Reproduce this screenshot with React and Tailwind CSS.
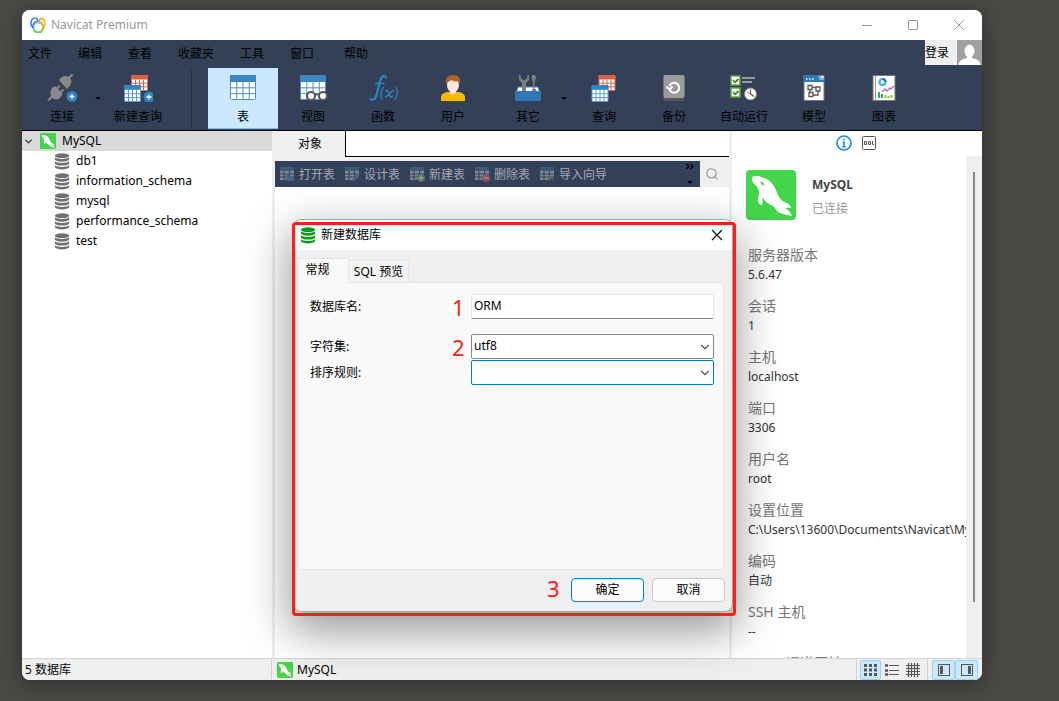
import React, { useState } from 'react'
import { ChevronDown, Search } from 'lucide-react'

const menus = ['文件', '编辑', '查看', '收藏夹', '工具', '窗口', '帮助']
const databases = ['db1', 'information_schema', 'mysql', 'performance_schema', 'test']

const details = [
  ['服务器版本', '5.6.47'],
  ['会话', '1'],
  ['主机', 'localhost'],
  ['端口', '3306'],
  ['用户名', 'root'],
  ['设置位置', 'C:\\Users\\13600\\Documents\\Navicat\\MySQL\\servers'],
  ['编码', '自动'],
  ['SSH 主机', '--'],
  ['HTTP 通道网址', '--'],
]

function NavicatLogo() {
  return (
    <svg viewBox="0 0 16 16" className="size-4" fill="none" strokeWidth="1.6">
      <path d="M3.600 10a4.800 4.800 0 1 0 9.400 0" stroke="#35c98c" />
      <path d="M4.500 13.200a4.800 4.800 0 0 0 8.500-3" stroke="#8ed62a" />
      <path d="M3.600 10.500C3.800 7.500 6 6 8.300 6s4.300 1.500 4.700 4" stroke="#6fc5a0" strokeWidth="1" />
      <path d="M2.600 10.200C0 8 .3 3 3.400 1.400 5.500 .4 8 1.300 7.900 4.200 5.500 4.400 3 6 2.600 10.200z" stroke="#2f80f5" />
      <path d="M9.700 5C8.900 2 11.300 .6 13 1.900c2.300 2 2.700 5.500.7 8.100C13.500 7.500 12 6 9.700 5z" stroke="#fba70b" />
    </svg>
  )
}

function MysqlLogo({ className }) {
  return (
    <svg viewBox="0 0 50 50" className={className}>
      <rect width="50" height="50" rx="4" fill="#43d54a" />
      <path
        fill="#fff"
        d="M6 8c1-2 3-2.500 5-2 3 0 5 1.500 7 2 4 1 8 4.500 10.500 9 2 4 3.500 8 5 11 2 3 6 4 9 6 1.500 1.500 2.500 3 2.500 4.200-2-1-4-.8-5.500-.2 2.500 2 5.500 4.500 6.500 8-4-1-9-1.500-13-3.500-2.500-1.500-3.500-4.500-6-6.500-4-2-8-4-10-8.500-1 2-.3 4-.5 6-.3 2-2.500 1.500-3.500 0-1.500-2-1.500-5-.5-7.500.8-1.500 1-3 .3-5C12 18 10.500 16 9 14.500 7 13 5.500 10.500 6 8z"
      />
      <path fill="#43d54a" d="M14 11.500c2-.5 4 .8 3.800 3-.8 1.500-2.500.8-2.300-.8-.2-1-.8-1.600-1.500-2.200z" />
    </svg>
  )
}

function DatabaseIcon({ className }) {
  return (
    <svg viewBox="0 0 16 18" className={className} fill="currentColor">
      <ellipse cx="8" cy="2.800" rx="7.500" ry="2.600" />
      <path d="M.5 4.500c2 2.400 13 2.400 15 0v2.700c-2 2.600-13 2.600-15 0z" />
      <path d="M.5 8.800c2 2.400 13 2.400 15 0v2.500c-2 2.600-13 2.600-15 0z" />
      <path d="M.5 12.900c2 2.400 13 2.400 15 0v2.300c-2 3-13 3-15 0z" />
    </svg>
  )
}

function Sheet({ x, y, w, h, head, line, body = '#fff' }) {
  const top = h * 0.27
  const cols = [1, 2, 3].map((n) => x + (w * n) / 4)
  const rows = [1, 2].map((n) => y + top + ((h - top) * n) / 3)
  return (
    <g>
      <rect x={x} y={y} width={w} height={h} rx="1" fill={body} stroke={line} />
      <rect x={x - 0.5} y={y - 0.5} width={w + 1} height={top + 0.5} rx="1" fill={head} />
      {cols.map((c) => <path key={c} d={`M${c} ${y + top}V${y + h}`} stroke={line} />)}
      {rows.map((r) => <path key={r} d={`M${x} ${r}H${x + w}`} stroke={line} />)}
    </g>
  )
}

function PlusBadge({ x, y }) {
  return (
    <g>
      <circle cx={x} cy={y} r="5.500" fill="#2f84c6" />
      <path d={`M${x - 2.5} ${y}h5M${x} ${y - 2.5}v5`} stroke="#fff" strokeWidth="1.300" />
    </g>
  )
}

const toolIcons = {
  connect: (
    <>
      <g fill="#8a8a8a" stroke="#8a8a8a">
        <path d="M11.500 6c2-3 5.500-4.500 8.500-3s3.500 4 2.500 7l-3.500 4.500z" strokeWidth="1" />
        <path d="M20.500 4.500L24.500 .5" strokeWidth="2.200" />
        <path d="M4 14.500l3-2 7 7c-.5 3-3 5.500-6 5.500s-5-2-5-5c-.2-2 .3-4 1-5.500z" strokeWidth="1" />
        <path d="M4.500 22L0 26.500M8.500 15l3-3M12 18.500l3.500-3" strokeWidth="2" />
      </g>
      <PlusBadge x={24} y={22.5} />
    </>
  ),
  newQuery: (
    <>
      <Sheet x={7.5} y={1.5} w={16} h={15} head="#dc6245" line="#dc6245" />
      <Sheet x={0.5} y={11.5} w={16} h={16} head="#2f84c6" line="#5a9bd3" />
      <PlusBadge x={25} y={23} />
    </>
  ),
  table: <Sheet x={1.5} y={1.5} w={25} h={24} head="#3a87c3" line="#4a90c8" />,
  view: (
    <>
      <Sheet x={1.5} y={1.5} w={25} h={24} head="#3a87c3" line="#4a90c8" />
      <g fill="#fff" stroke="#555" strokeWidth="2">
        <path d="M16 21c1-1 2-1 3 0" fill="none" />
        <circle cx="12" cy="22" r="4" />
        <circle cx="24" cy="22" r="4" />
      </g>
    </>
  ),
  func: (
    <g fill="none" stroke="#2f84c6" strokeLinecap="round">
      <path d="M17 3.500c-.5-1.500-3-2-4.500 0C10 7 9 18 6.500 23.500c-1.200 2.500-3.500 3-5 1.500" strokeWidth="2.200" />
      <path d="M6.500 9.500h8.500" strokeWidth="1.600" />
      <path d="M14.500 13.500c-3 3-3.500 8-1.500 12M27 13.500c2.500 4 1.500 9-1.500 12" strokeWidth="1.200" />
      <path d="M16.500 17c1.500-1 2.500-.5 3 1.500l1 3c.5 1.700 1.500 2 3 .5M24.500 16.500c-2.500 0-5 6.500-8 6" strokeWidth="1.500" />
    </g>
  ),
  user: (
    <>
      <path d="M2 27v-4c0-3 4-5 8-5h8c4 0 8 2 8 5v4z" fill="#fab800" />
      <path d="M11 14h6v5c-2 2-4 2-6 0z" fill="#fbdcc8" />
      <ellipse cx="14" cy="11" rx="6" ry="7.500" fill="#fde8db" />
      <path d="M7 10C6 4 9 1 14 1s8 3 7 9l-1.500-3c-3 1-6 0-7-1-1 1-3 2-4 1.500z" fill="#b0622a" />
    </>
  ),
  other: (
    <>
      <path d="M4 13h20l2 6H2z" fill="#fff" stroke="#3a87c3" />
      <path d="M5 1v5l3 3v9h4V9l3-3V1h-1.500L13 4.500l-3 2-3-2L6.500 1zM18 1h3l1 3-1.500 4v7H22v4h-4v-4h1V8l-1.500-4z" fill="#7c7f82" />
      <path d="M1 17h26v10H1z" fill="#2f78b3" />
    </>
  ),
  query: (
    <>
      <Sheet x={9} y={1.5} w={16} h={15} head="#dc6245" line="#dc6245" />
      <Sheet x={2} y={11.5} w={16} h={16} head="#2f84c6" line="#5a9bd3" />
    </>
  ),
  backup: (
    <>
      <rect x="3.500" y="1" width="21" height="26" rx="2" fill="#555" />
      <rect x="3.500" y="1" width="21" height="23" rx="2" fill="#9b9b9b" />
      <path d="M10 16.500a5 5 0 1 0-.5-4.500M6.500 12.500l3 3 3-3" fill="none" stroke="#fff" strokeWidth="2" />
    </>
  ),
  automation: (
    <>
      <g fill="#fff" stroke="#61a53c" strokeWidth="1.500">
        <rect x="1" y="2" width="9" height="9" />
        <rect x="1" y="14" width="9" height="9" />
      </g>
      <path d="M3 6l2 2.500L8.500 5M3 18l2 2.500L8.500 17" fill="none" stroke="#3d8c2a" strokeWidth="1.800" />
      <path d="M12 4h13M12 8h10" stroke="#999" strokeWidth="2" />
      <circle cx="20.500" cy="20" r="6" fill="#fff" stroke="#888" />
      <path d="M20.500 15.500V20l3.500 2.500" fill="none" stroke="#555" strokeWidth="1.200" />
      <path d="M20.500 20L17 18" stroke="#e3513b" />
    </>
  ),
  model: (
    <>
      <rect x="4" y="1.500" width="20" height="25" fill="#fff" stroke="#777" />
      <path d="M3.500 1h15l6 5v2h-21z" fill="#2f78b3" />
      <path d="M18 1l6.500 5h-5z" fill="#6db6ee" />
      <path d="M6 5h1.500M9 5h1.500M12 5h1.500" stroke="#fff" strokeWidth="1.500" />
      <path d="M8 11.500h4v4H8zM16 13h4v4h-4zM9 18.500h4v4H9zM12 13.500h4M13 21h5v-4M10 15.500v3" fill="none" stroke="#555" strokeWidth="1.300" />
    </>
  ),
  chart: (
    <>
      <rect x="3" y="1.500" width="22" height="25" fill="#fff" stroke="#777" />
      <path d="M5.500 1.500v25" stroke="#999" />
      <circle cx="12.500" cy="8" r="3" fill="none" stroke="#37b2ea" strokeWidth="2" />
      <path d="M12.500 5a3 3 0 0 1 3 3" fill="none" stroke="#2b6fb5" strokeWidth="2" />
      <path d="M12 18l3-3 2 2 3-3 1 1 3-3" fill="none" stroke="#b568cf" strokeWidth="1.300" />
      <path d="M9 18v6M12 20v4" stroke="#32b14a" strokeWidth="2" />
      <path d="M15.500 21v3M18.500 22v2M21.500 21v3" stroke="#86cc2c" strokeWidth="2" />
    </>
  ),
}

function Tool({ icon, label, active, width = 'w-[70px]' }) {
  return (
    <button
      className={`${width} h-[61px] shrink-0 flex flex-col items-center gap-[7px] pt-1.5 text-black ${
        active ? 'bg-[#cce8ff] border-b border-[#78bdf0]' : ''
      }`}
    >
      <svg viewBox="0 0 30 28" className="w-[30px] h-7 shrink-0">
        <g transform="translate(1 0)">{toolIcons[icon]}</g>
      </svg>
      <span className="leading-4 whitespace-nowrap">{label}</span>
    </button>
  )
}

function SplitTool({ icon, label }) {
  return (
    <div className="flex items-center w-[81px] shrink-0 pl-[7px]">
      <Tool icon={icon} label={label} width="w-[66px]" />
      <button aria-label={`${label} 选项`} className="border-x-3 border-t-3 border-x-transparent border-t-black" />
    </div>
  )
}

function ActionIcon({ kind }) {
  return (
    <svg viewBox="0 0 16 16" className="size-4 shrink-0">
      <path d="M1 1h14v4H1z" fill="#3d5a78" />
      <path d="M1 5h3.500v2.500H1zM5.500 5H10v2.500H5.500zM11 5h4v2.500h-4zM1 8.500h3.500v2H1zM5.500 8.500H10v2H5.500zM11 8.500h4v2h-4zM1 11.500h3.500V14H1zM5.500 11.500H10V14H5.500z" fill="#7d8797" />
      {kind === 'open' && <path d="M7 9h3l1 1.500h4V15H7z" fill="#46627f" />}
      {kind === 'design' && <path d="M8 14l5-6 2.500 2-5 5-3 .5z" fill="#46627f" />}
      {kind === 'add' && <><circle cx="12" cy="12" r="4" fill="#54755f" /><path d="M9.500 12h5M12 9.500v5" stroke="#a6b3ab" /></>}
      {kind === 'delete' && <><circle cx="12" cy="12" r="4" fill="#87535a" /><path d="M9.500 12h5" stroke="#b9a0a8" /></>}
      {kind === 'import' && <path d="M7 11.500l4-3v2c3 0 4.500 2 4.500 5-1-2-2.500-2.500-4.500-2.500v2z" fill="#4c6d60" />}
    </svg>
  )
}

function ActionBar() {
  const actions = [
    ['open', '打开表'],
    ['design', '设计表'],
    ['add', '新建表'],
    ['delete', '删除表'],
    ['import', '导入向导'],
  ]
  return (
    <div className="h-[26px] flex">
      <div className="flex-1 flex items-center gap-[9px] pl-1 pr-1.5 bg-[#344057] text-[#a4a9b3]">
        {actions.map(([kind, label]) => (
          <button key={kind} className="flex items-center gap-1 whitespace-nowrap leading-4">
            <ActionIcon kind={kind} />
            <span className="pt-0.5">{label}</span>
          </button>
        ))}
        <button aria-label="更多" className="ml-auto self-stretch">
          <svg viewBox="0 0 8 22" className="w-2 h-[22px]">
            <path d="M.5 1l2.500 2.500L.5 6M4.500 1L7 3.500 4.500 6" fill="none" stroke="#000" strokeWidth="1.300" />
            <path d="M1 18h6l-3 3z" />
          </svg>
        </button>
      </div>
      <button aria-label="搜索" className="w-[29px] flex items-center pl-[5px] text-[#8a8a8a]">
        <Search size={14} strokeWidth={1.8} />
      </button>
    </div>
  )
}

function ComboBox({ id, options, focused }) {
  return (
    <div className="relative">
      <select
        id={id}
        className={`block w-full h-[25px] appearance-none rounded-xs border bg-white pl-[2px] pr-6 pb-[2px] outline-none ${
          focused ? 'border-[#0078d4]' : 'border-[#868686]'
        }`}
      >
        {options.map((o) => <option key={o}>{o}</option>)}
      </select>
      <ChevronDown size={14} strokeWidth={2} className="absolute right-[2px] top-1.5 text-[#555] pointer-events-none" />
    </div>
  )
}

function FormRow({ id, label, mark, children }) {
  return (
    <div className="flex items-center h-[25px]">
      <label htmlFor={id} className="flex-1">{label}</label>
      <span className="w-[19px] text-[22px] leading-6 text-[#ff1e12]">{mark}</span>
      <div className="w-[243px]">{children}</div>
    </div>
  )
}

function NewDatabaseDialog() {
  const [name, setName] = useState('ORM')
  return (
    <div
      role="dialog"
      aria-label="新建数据库"
      className="absolute left-[271px] top-[209px] w-[440px] h-[393px] flex flex-col rounded-lg border border-[#a3a3a3] bg-[#efefef] shadow-[0_16px_44px_4px_rgba(0,0,0,0.4)]"
    >
      <div className="h-[30px] shrink-0 flex items-center gap-[5px] rounded-t-lg bg-white pl-1.5 pr-[9px]">
        <DatabaseIcon className="w-4 h-[17px] text-[#0c9a17]" />
        <span className="flex-1">新建数据库</span>
        <button aria-label="关闭">
          <svg viewBox="0 0 12 12" className="size-3"><path d="M1 1l10 10M11 1L1 11" stroke="#111" strokeWidth="1.200" /></svg>
        </button>
      </div>

      <div className="flex-1 flex flex-col px-1 pt-2 pr-2 pb-[9px]">
        <div className="flex items-end" role="tablist">
          <button role="tab" className="relative z-10 -mb-px h-[25px] w-[51px] border border-b-0 border-[#e5e5e5] bg-[#f9f9f9] pr-3 pb-0.5 leading-5">常规</button>
          <button role="tab" className="h-[22px] w-[60px] border border-l-0 border-b-0 border-[#e5e5e5] bg-[#f3f3f3] whitespace-nowrap leading-5">SQL 预览</button>
        </div>
        <div className="flex-1 border border-[#e5e5e5] bg-[#f9f9f9] pl-[11px] pr-[9px] pt-[11px]">
          <FormRow id="db-name" label="数据库名:" mark="1">
            <input
              id="db-name"
              value={name}
              onChange={(e) => setName(e.target.value)}
              className="block w-full h-[25px] rounded-xs border border-[#e5e5e5] border-b-[#868686] bg-white pl-[2px] pb-[2px] outline-none"
            />
          </FormRow>
          <div className="mt-[15px] space-y-px">
            <FormRow id="charset" label="字符集:" mark="2">
              <ComboBox id="charset" options={['utf8']} />
            </FormRow>
            <FormRow id="collation" label="排序规则:">
              <ComboBox id="collation" options={['']} focused />
            </FormRow>
          </div>
        </div>
        <div className="-mr-px flex items-start justify-end gap-2 pt-2">
          <span className="w-4 text-[22px] leading-5 text-[#ff1e12]">3</span>
          <button className="w-[73px] h-6 rounded border border-[#0078d4] bg-[#fbfbfb]">确定</button>
          <button className="w-[73px] h-6 rounded border border-[#c8c8c8] bg-[#fbfbfb]">取消</button>
        </div>
      </div>

      {/* red highlight around the dialog */}
      <div className="absolute -left-[2px] top-[2px] w-[444px] h-[394px] rounded-sm border-3 border-[#ff1e12] pointer-events-none" />
    </div>
  )
}

function InfoPanel() {
  return (
    <aside className="w-[250px] shrink-0 flex flex-col bg-white">
      <div className="h-[25px] shrink-0 flex items-center justify-center gap-2.5 pr-0.5 pb-0.5">
        <button aria-label="信息" className="size-4">
          <svg viewBox="0 0 16 16" fill="none" stroke="#1a86ff">
            <circle cx="8" cy="8" r="7" strokeWidth="1.600" />
            <path d="M8 3.800v1.700M6.500 7.300H8v4.200M6.300 11.700h3.500" strokeWidth="1.600" />
          </svg>
        </button>
        <button aria-label="DDL" className="size-3.5">
          <svg viewBox="0 0 14 14" fill="none" stroke="#555">
            <rect x=".5" y=".5" width="13" height="13" rx="1" />
            <path d="M2.500 5.500h2v3h-2zM6.500 5.500h2v3h-2zM10.500 5v3.500H12" />
          </svg>
        </button>
      </div>
      <div className="flex-1 min-h-0 flex">
        <div className="flex-1 min-w-0 overflow-hidden pt-3.5">
          <div className="flex gap-4 pl-3.5">
            <MysqlLogo className="size-[50px]" />
            <div className="pt-1.5">
              <p className="leading-[18px] font-bold text-[#444]">MySQL</p>
              <p className="mt-1.5 leading-[18px] text-[#999]">已连接</p>
            </div>
          </div>
          <dl className="mt-[25px] pl-4 whitespace-nowrap">
            {details.map(([label, value]) => (
              <div key={label} className="mb-[11px]">
                <dt className="text-sm leading-5 text-[#777]">{label}</dt>
                <dd className="leading-5 text-[#333]">{value}</dd>
              </div>
            ))}
          </dl>
        </div>
        <div className="w-4 flex justify-center bg-[#efefef] pt-4 pb-14">
          <div className="w-[2px] bg-[#868686]" />
        </div>
      </div>
    </aside>
  )
}

function StatusBar() {
  return (
    <footer className="h-[22px] shrink-0 flex items-center border-t border-[#d5d5d5] bg-[#efefef]">
      <span className="w-[250px] h-[19px] leading-[19px] border-r border-[#d0d0d0] pl-[3px]">5 数据库</span>
      <span className="flex-1 flex items-center gap-1 pl-[5px]">
        <MysqlLogo className="size-4" />
        MySQL
      </span>
      <div className="flex items-center h-5 border-l border-[#d0d0d0] pl-[3px] pr-1 text-[#555]">
        <button aria-label="缩略图" className="w-[21px] h-5 flex items-center justify-center rounded-xs border border-[#99d1ff] bg-[#cce8ff]">
          <svg viewBox="0 0 13 12" className="w-[13px] h-3" fill="none" stroke="currentColor" strokeWidth="3" strokeDasharray="3 2">
            <path d="M0 1.500h13M0 6h13M0 10.500h13" />
          </svg>
        </button>
        <button aria-label="列表" className="w-[21px] h-5 flex items-center justify-center">
          <svg viewBox="0 0 14 12" className="w-3.5 h-3" stroke="currentColor">
            <path d="M4 1.500h10M4 6.500h10M4 10.500h10" />
            <path d="M0 1.500h3M0 6.500h3M0 10.500h3" strokeWidth="2.500" />
          </svg>
        </button>
        <button aria-label="网格" className="w-[21px] h-5 flex items-center justify-center">
          <svg viewBox="0 0 14 14" className="size-3.5" stroke="currentColor" strokeWidth="1.200">
            <path d="M0 2.500h14M0 5.500h14M0 8.500h14M0 11.500h14M2.500 0v14M5.500 0v14M8.500 0v14M11.500 0v14" />
          </svg>
        </button>
        <span className="mx-1 w-px h-5 bg-[#d0d0d0]" />
        <button aria-label="左侧窗格" className="w-[23px] h-5 flex items-center justify-center rounded-xs border border-[#99d1ff] bg-[#cce8ff]">
          <svg viewBox="0 0 12 12" className="size-3"><rect x=".5" y=".5" width="11" height="11" fill="none" stroke="#555" /><path d="M2 2h3v8H2z" fill="#555" /></svg>
        </button>
        <button aria-label="右侧窗格" className="w-[23px] h-5 flex items-center justify-center rounded-xs border border-[#99d1ff] bg-[#cce8ff]">
          <svg viewBox="0 0 12 12" className="size-3"><rect x=".5" y=".5" width="11" height="11" fill="none" stroke="#555" /><path d="M7 2h3v8H7z" fill="#555" /></svg>
        </button>
      </div>
    </footer>
  )
}

export default function App() {
  return (
    <div className="h-screen bg-[#4b4a47] pt-2.5 pr-[77px] pb-[21px] pl-[22px] text-xs leading-4 text-black font-['Noto_Sans','Noto_Sans_CJK_SC',sans-serif]">
      <div className="relative h-full flex flex-col overflow-hidden rounded-lg bg-[#efefef] shadow-[0_4px_24px_rgba(0,0,0,0.4)]">
        <header className="h-[30px] shrink-0 flex items-center gap-[5px] bg-white pl-2 pr-[17px] text-[#999]">
          <NavicatLogo />
          <h1 className="flex-1">Navicat Premium</h1>
          <div className="flex items-center gap-[34px]">
            <button aria-label="最小化"><svg viewBox="0 0 12 12" className="size-3" stroke="#999"><path d="M1 6.500h10" /></svg></button>
            <button aria-label="最大化"><svg viewBox="0 0 12 12" className="size-3" fill="none" stroke="#999"><rect x="1.500" y="1.500" width="9" height="9" rx=".5" /></svg></button>
            <button aria-label="关闭窗口"><svg viewBox="0 0 12 12" className="size-3" stroke="#999"><path d="M1 1l10 10M11 1L1 11" /></svg></button>
          </div>
        </header>

        <nav className="h-[25px] shrink-0 flex items-center gap-[26px] bg-[#344057] pl-1.5">
          {menus.map((m) => <button key={m} className="pt-0.5 last-of-type:pl-1 whitespace-nowrap">{m}</button>)}
          <div className="ml-auto h-full flex bg-[#efefef]">
            <button className="w-8 text-left">登录</button>
            <svg viewBox="0 0 25 25" className="size-[25px]">
              <rect width="25" height="25" fill="#a0a0a0" />
              <ellipse cx="12.500" cy="11" rx="5" ry="6.500" fill="#fff" />
              <path d="M10 15h5v3c4 1 8 2 8.500 7h-22C2 20 6 19 10 18z" fill="#fff" />
            </svg>
          </div>
        </nav>

        <div className="h-[66px] shrink-0 flex items-end border-b border-black bg-[#344057] pb-px">
          <SplitTool icon="connect" label="连接" />
          <Tool icon="newQuery" label="新建查询" />
          <span className="ml-[18px] mr-4 w-px h-[59px] bg-[#232c3d]" />
          <Tool icon="table" label="表" active />
          <Tool icon="view" label="视图" />
          <Tool icon="func" label="函数" />
          <Tool icon="user" label="用户" />
          <SplitTool icon="other" label="其它" />
          <Tool icon="query" label="查询" />
          <Tool icon="backup" label="备份" />
          <Tool icon="automation" label="自动运行" />
          <Tool icon="model" label="模型" />
          <Tool icon="chart" label="图表" />
        </div>

        <div className="flex-1 min-h-0 flex gap-[3px]">
          <aside className="w-[250px] shrink-0 bg-white">
            <div className="h-5 flex items-center bg-[#d9d9d9] pl-px">
              <ChevronDown size={11} strokeWidth={3} className="text-[#333]" />
              <MysqlLogo className="size-4 ml-1.5 mr-1.5" />
              MySQL
            </div>
            <ul>
              {databases.map((db) => (
                <li key={db} className="h-5 flex items-center gap-1.5 pl-8">
                  <DatabaseIcon className="w-4 h-[17px] text-[#707070]" />
                  {db}
                </li>
              ))}
            </ul>
          </aside>

          <main className="flex-1 min-w-0 flex flex-col">
            <div className="h-[26px] flex">
              <button className="w-[70px]">对象</button>
              <div className="flex-1 border-l border-b border-black bg-white" />
            </div>
            <div className="pt-1">
              <ActionBar />
            </div>
            <div className="flex-1 bg-white" />
          </main>

          <InfoPanel />
        </div>

        <StatusBar />
        <NewDatabaseDialog />
      </div>
    </div>
  )
}
